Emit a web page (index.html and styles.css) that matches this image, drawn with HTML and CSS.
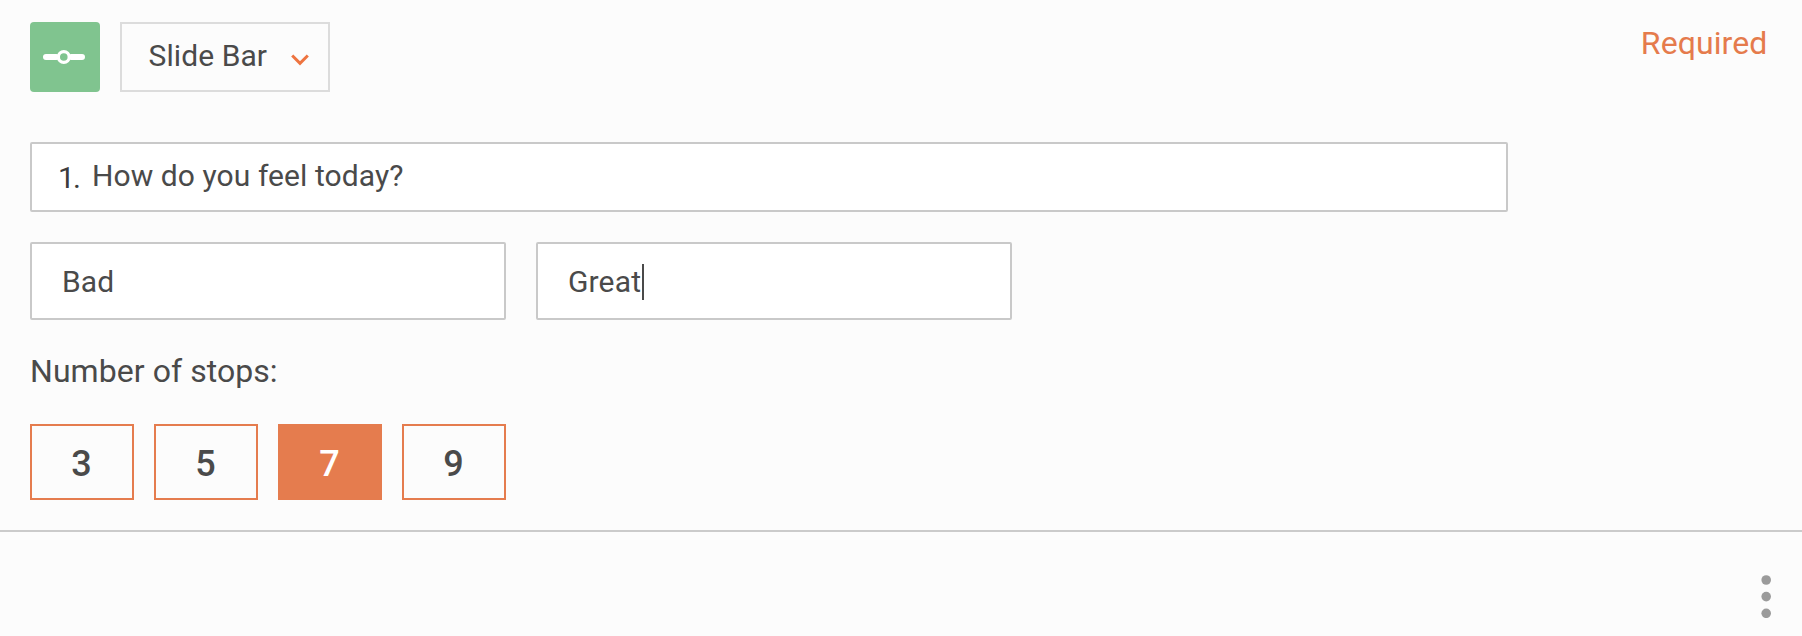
FILE: index.html
```html
<!DOCTYPE html>
<html lang="en">
<head>
<meta charset="utf-8">
<title>Question editor</title>
<link rel="stylesheet" href="styles.css">
</head>
<body>
<main class="editor">
  <header class="toolbar">
    <span class="type-icon">
      <svg width="70" height="70" viewBox="0 0 70 70" fill="none" stroke="#fff">
        <path d="M16 35h10.300M41.300 35h10.700" stroke-width="6" stroke-linecap="round"/>
        <circle cx="33.800" cy="35" r="5.400" stroke-width="3.200"/>
      </svg>
    </span>
    <div class="type-select">
      <span class="type-name">Slide Bar</span>
      <svg class="chevron" width="18" height="12" viewBox="0 0 18 12" fill="none" stroke="#ee7440" stroke-width="3">
        <path d="M1.2 1.5 9 9.3l7.800-7.800"/>
      </svg>
    </div>
    <span class="required">Required</span>
  </header>
  <div class="question"><span class="number">1.</span><span class="question-text">How do you feel today?</span></div>
  <div class="labels">
    <div class="field"><span class="bad">Bad</span></div>
    <div class="field"><span class="great">Great</span><i class="caret"></i></div>
  </div>
  <p class="stops-title">Number of stops:</p>
  <div class="stops">
    <button class="stop">3</button>
    <button class="stop">5</button>
    <button class="stop selected">7</button>
    <button class="stop">9</button>
  </div>
</main>
<footer class="footer">
  <svg width="12" height="44" viewBox="0 0 12 44" fill="#9b9b9b">
    <circle cx="6.200" cy="6" r="4.800"/><circle cx="6.200" cy="22.600" r="4.800"/><circle cx="6.200" cy="39.300" r="4.800"/>
  </svg>
</footer>
</body>
</html>
```
FILE: styles.css
```css
* { box-sizing: border-box; }
body {
  margin: 0;
  background: #fcfcfc;
  color: #4a4a4a;
  font: 30px/36px Roboto, sans-serif;
}
svg { display: block; }
.editor {
  height: 532px;
  padding: 22px 30px 0;
  border-bottom: 2px solid #cbcbcb;
}
.toolbar { display: flex; align-items: flex-start; height: 70px; }
.type-icon {
  width: 70px;
  height: 70px;
  margin-right: 20px;
  border-radius: 4px;
  background: #80c48f;
}
.type-select {
  display: flex;
  width: 210px;
  height: 70px;
  padding: 14px 19px 0 26.5px;
  border: 2px solid #dcdcdc;
  justify-content: space-between;
  letter-spacing: .08px;
}
.chevron { margin-top: 16px; }
.required {
  margin: 3px 4.5px 0 auto;
  color: #e57b4c;
  font-size: 32px;
  letter-spacing: .1px;
}
.question {
  display: flex;
  width: 1478px;
  height: 70px;
  margin-top: 50px;
  padding: 14px 0 0 26px;
  border: 2px solid #c9c9c9;
  border-radius: 2px;
  background: #fff;
}
.number { width: 34px; padding-top: 2px; letter-spacing: -1.8px; color: #3c3c3c; }
.question-text { letter-spacing: .08px; }
.labels { display: flex; gap: 30px; margin-top: 30px; }
.field {
  display: flex;
  align-items: center;
  width: 476px;
  height: 78px;
  padding: 1px 0 0 30px;
  border: 2px solid #c9c9c9;
  border-radius: 2px;
  background: #fff;
  letter-spacing: .15px;
}
.caret { width: 2px; height: 36px; margin-left: 1px; background: #4a4a4a; }
.stops-title { margin: 33px 0 0; font-size: 32px; letter-spacing: .06px; }
.stops { display: flex; gap: 20px; margin-top: 35px; }
.stop {
  width: 104px;
  height: 76px;
  padding: 4px 1px 0 0;
  border: 2px solid #e57c4e;
  background: transparent;
  color: #4a4a4a;
  font: 500 36px/68px Roboto, sans-serif;
}
.selected { background: #e57c4e; color: #fff; }
.footer { display: flex; justify-content: flex-end; padding: 42px 30px 0 0; }
```
